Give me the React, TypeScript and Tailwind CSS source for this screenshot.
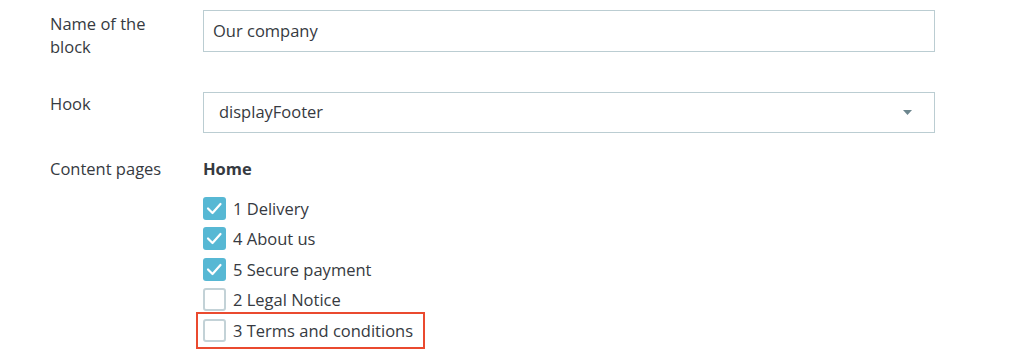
import React from "react";

function Check({ checked }: { checked: boolean }) {
  if (checked) {
    return (
      <span className="w-[23px] h-[23px] rounded-[3px] bg-[#57b8d4] flex items-center justify-center shrink-0">
        <svg width="23" height="23" viewBox="0 0 23 23" fill="none">
          <path d="M5 11.5 L9.5 16 L17.5 7" stroke="white" strokeWidth="2.2" strokeLinecap="round" strokeLinejoin="round" />
        </svg>
      </span>
    );
  }
  return <span className="w-[23px] h-[23px] rounded-[3px] border-2 border-[#c3d2d7] bg-white shrink-0" />;
}

const items = [
  { label: "1 Delivery", checked: true },
  { label: "4 About us", checked: true },
  { label: "5 Secure payment", checked: true },
  { label: "2 Legal Notice", checked: false },
  { label: "3 Terms and conditions", checked: false, marked: true },
];

export default function App() {
  return (
    <div className="w-[1024px] h-[359px] overflow-hidden bg-white font-['Open_Sans',sans-serif] text-[16.5px] text-[#363a41] pl-[50px] pt-[10px]">
      <div className="flex h-[42px]">
        <div className="w-[153px] pr-[36px] pt-[2px] leading-[23px]">Name of the block</div>
        <div className="w-[732px] h-[42px] border border-[#bbcdd2] flex items-center pl-[9px]">Our company</div>
      </div>
      <div className="flex mt-[40px]">
        <div className="w-[153px] pr-[36px] leading-[23px]">Hook</div>
        <div className="w-[732px] h-[41px] border border-[#bbcdd2] flex items-center justify-between pl-[15px] pr-[22px]">
          <span>displayFooter</span>
          <svg width="9" height="5" viewBox="0 0 9 5">
            <path d="M0 0 H9 L4.5 5 Z" fill="#6c868e" />
          </svg>
        </div>
      </div>
      <div className="flex mt-[24px]">
        <div className="w-[153px] pr-[36px] leading-[23px] whitespace-nowrap">Content pages</div>
        <div className="flex flex-col">
          <div className="font-bold leading-[23px]">Home</div>
          <div className="mt-[13px] flex flex-col">
            {items.map((it) => (
              <div key={it.label} className="relative h-[30.5px] flex items-center gap-[7px] leading-[23px]">
                <Check checked={it.checked} />
                <span>{it.label}</span>
                {it.marked && (
                  <span className="absolute left-[-7px] top-[-3.5px] w-[229px] h-[37px] border-2 border-[#ea4a2f] pointer-events-none" />
                )}
              </div>
            ))}
          </div>
        </div>
      </div>
    </div>
  );
}
